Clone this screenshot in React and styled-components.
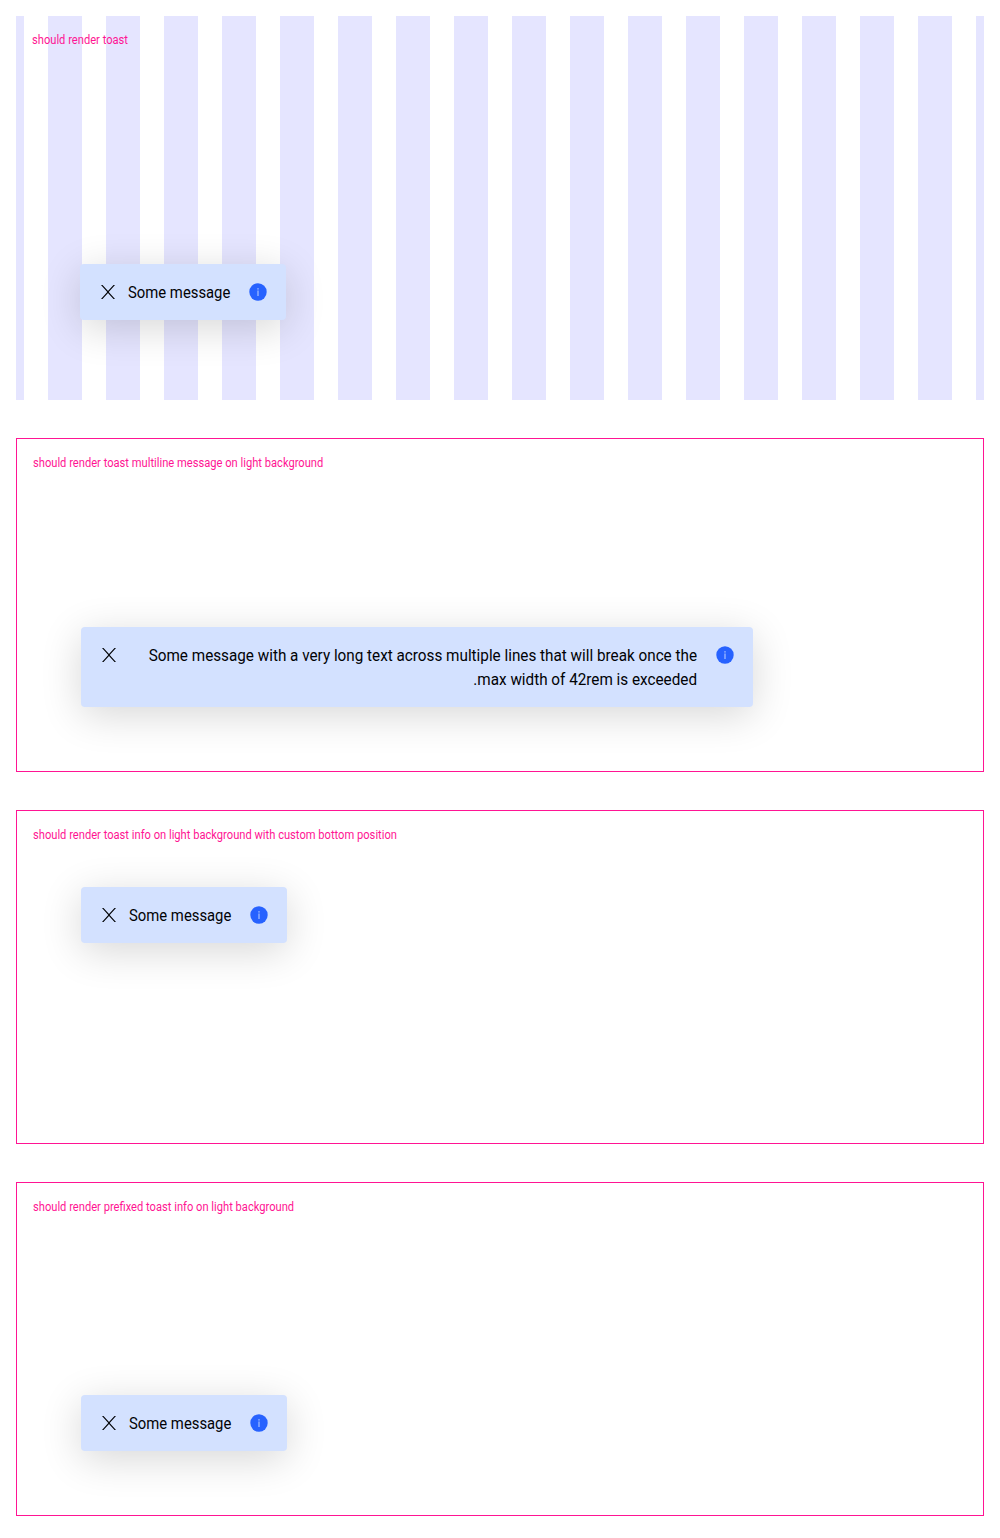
import React from 'react';
import styled, { createGlobalStyle, css } from 'styled-components';

const GlobalStyle = createGlobalStyle`
  *, *::before, *::after { box-sizing: border-box; }
  body {
    margin: 0;
    background: #fff;
    font-family: Roboto, "Liberation Sans", sans-serif;
  }
`;

const Page = styled.main`
  display: flex;
  flex-direction: column;
  gap: 38px;
  padding: 16px 16px 22px;
`;

const striped = css`
  height: 384px;
  padding: 16px 64px 80px 16px;
  background: repeating-linear-gradient(90deg, #e5e5ff 0 8px, #fff 8px 32px, #e5e5ff 32px 58px);
`;

const outlined = css`
  height: 334px;
  padding: 16px 64px 64px 16px;
  border: 1px solid #ff1493;
`;

const Playground = styled.section`
  display: flex;
  flex-direction: column;
  align-items: flex-start;
  ${(p) => (p.$striped ? striped : outlined)}
`;

const Label = styled.h2`
  margin: 0;
  color: #ff1493;
  font-size: 12px;
  font-weight: 400;
  line-height: 16px;
  white-space: nowrap;
  transform: scaleX(0.929);
  transform-origin: left center;
`;

const ToastBox = styled.div`
  display: flex;
  align-items: flex-start;
  direction: rtl;
  max-width: 672px;
  margin: ${(p) => (p.$top ? `${p.$top}px` : 'auto')} 0 0 48px;
  padding: 16px;
  border-radius: 4px;
  background: #d3e1ff;
  box-shadow: 0 8px 40px rgba(0, 0, 0, 0.16);
`;

const Message = styled.p`
  flex: 1 1 auto;
  margin: 0 16px -1px ${(p) => (p.$long ? -8 : 0)}px;
  padding-top: 1px;
  color: #010205;
  font-size: 16px;
  line-height: 24px;
  text-align: right;
  transform: scaleX(${(p) => (p.$long ? 0.954 : 0.927)});
  transform-origin: right center;
`;

const Icon = styled.svg`
  display: block;
  flex: none;
  width: 24px;
  height: 24px;
`;

const CloseButton = styled.button`
  flex: none;
  width: 24px;
  height: 24px;
  padding: 0;
  border: 0;
  background: transparent;
  color: #010205;
`;

const InfoIcon = () => (
  <Icon viewBox="0 0 24 24" aria-hidden="true">
    <circle cx="12" cy="12" r="8.7" fill="#2762ff" />
    <path d="M11.5 10.5h1V16h-1zM11.4 8.3h1.2v1.2h-1.2z" fill="#d3e1ff" opacity="0.9" />
  </Icon>
);

const CloseIcon = () => (
  <Icon viewBox="0 0 24 24" aria-hidden="true">
    <path
      d="M5 5h1.5L12 11.1 17.5 5H19l-6.3 7 6.3 7h-1.5L12 12.9 6.5 19H5l6.3-7z"
      fill="currentColor"
    />
  </Icon>
);

const Toast = ({ children, long, top }) => (
  <ToastBox role="status" $top={top}>
    <InfoIcon />
    <Message $long={long}>{children}</Message>
    <CloseButton type="button" aria-label="Close">
      <CloseIcon />
    </CloseButton>
  </ToastBox>
);

export default function App() {
  return (
    <>
      <GlobalStyle />
      <Page>
        <Playground $striped>
          <Label>should render toast</Label>
          <Toast>Some message</Toast>
        </Playground>
        <Playground>
          <Label>should render toast multiline message on light background</Label>
          <Toast long>
            Some message with a very long text across multiple lines that will break once the max
            width of 42rem is exceeded.
          </Toast>
        </Playground>
        <Playground>
          <Label>should render toast info on light background with custom bottom position</Label>
          <Toast top={44}>Some message</Toast>
        </Playground>
        <Playground>
          <Label>should render prefixed toast info on light background</Label>
          <Toast>Some message</Toast>
        </Playground>
      </Page>
    </>
  );
}
